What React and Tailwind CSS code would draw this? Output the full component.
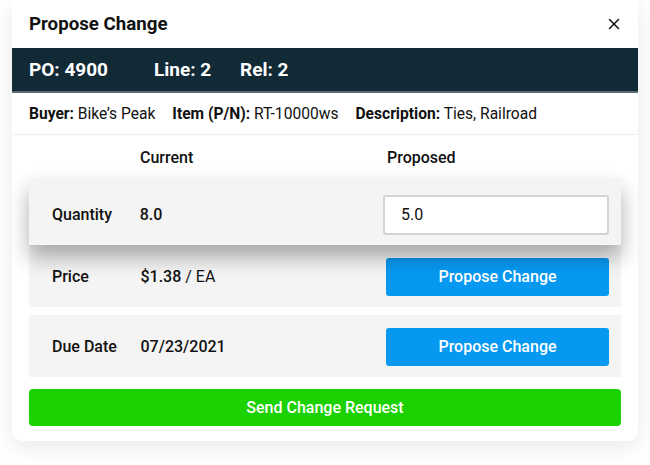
import { X } from 'lucide-react';

const font = { fontFamily: 'Roboto, "Liberation Sans", sans-serif' };

function Row({ label, current, children, raised }) {
  return (
    <div
      className={`relative flex items-center bg-[#f4f4f4] pl-[23px] pr-[12px] ${
        raised ? 'z-10 h-[67px] pt-[6px] shadow-[0_12px_20px_rgba(0,0,0,0.32)]' : 'h-[62px] pt-[2px]'
      }`}
    >
      <div className="w-[88px] text-[16px] font-medium text-[#111]">{label}</div>
      <div className="w-[247px] pl-[1px] text-[16px] text-[#111]">{current}</div>
      <div className="flex-1">{children}</div>
    </div>
  );
}

function ProposeButton() {
  return (
    <button className="ml-[1px] h-[38px] w-[223px] rounded-[3px] bg-[#0799f2] text-[16px] font-medium text-white">
      Propose Change
    </button>
  );
}

export default function App() {
  return (
    <div className="h-[465px] w-[650px] bg-white" style={font}>
      <div className="mx-[12px] w-[626px] overflow-hidden rounded-b-[10px] bg-white shadow-[0_6px_22px_rgba(0,0,0,0.09)]">
        <div className="flex h-[48px] items-center justify-between px-[17px]">
          <h2 className="text-[18.7px] font-bold text-[#111]">Propose Change</h2>
          <X size={18} strokeWidth={2} className="mr-[-2px] text-[#111]" />
        </div>

        <div className="flex h-[45px] items-center border-b-2 border-[#5b6e78] bg-[#122a35] px-[17px] pt-[2px] text-[19px] font-bold text-white">
          <span className="w-[125px]">PO: 4900</span>
          <span className="w-[86px]">Line: 2</span>
          <span>Rel: 2</span>
        </div>

        <div className="flex h-[42px] items-center gap-[17px] border-b border-[#eeeeee] px-[17px] pt-[3px] text-[15.6px] text-[#111]">
          <span>
            <span className="font-bold">Buyer:</span> Bike’s Peak
          </span>
          <span>
            <span className="font-bold">Item (P/N):</span> RT-10000ws
          </span>
          <span>
            <span className="font-bold">Description:</span> Ties, Railroad
          </span>
        </div>

        <div className="px-[17px] pb-[15px]">
          <div className="flex h-[43px] items-center pl-[111px] pt-[2px] text-[16px] font-medium text-[#111]">
            <span className="w-[247px]">Current</span>
            <span>Proposed</span>
          </div>

          <Row label="Quantity" current={<span className="font-medium">8.0</span>} raised>
            <input
              defaultValue="5.0"
              className="ml-[1px] h-[40px] w-[226px] rounded-[3px] border-2 border-[#d4d4d4] bg-white px-[16px] text-[16px] text-[#111] outline-none"
            />
          </Row>
          <Row
            label="Price"
            current={
              <span>
                <span className="font-medium">$1.38</span> / EA
              </span>
            }
          >
            <ProposeButton />
          </Row>
          <div className="h-[8px]" />
          <Row label="Due Date" current={<span className="font-medium">07/23/2021</span>}>
            <ProposeButton />
          </Row>

          <button className="mt-[12px] h-[37px] w-full rounded-[4px] bg-[#1bd100] text-[16px] font-medium text-white">
            Send Change Request
          </button>
        </div>
      </div>
    </div>
  );
}
